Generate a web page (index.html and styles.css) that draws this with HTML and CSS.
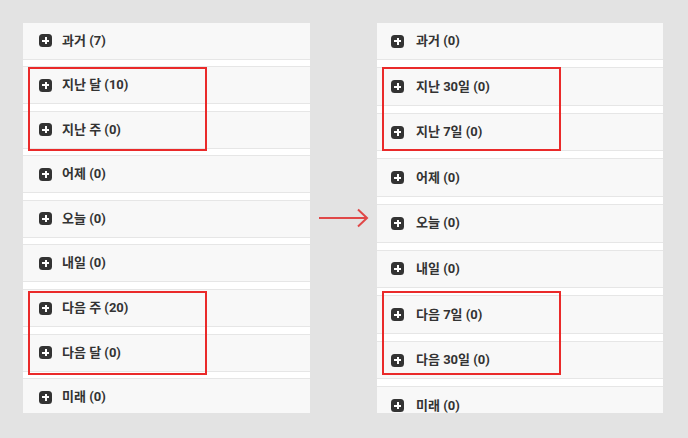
FILE: index.html
```html
<!DOCTYPE html>
<html lang="ko">
<head>
<meta charset="utf-8">
<link rel="stylesheet" href="styles.css">
</head>
<body>
<div class="stage">
  <div class="panel panel-left">
    <ul class="list">
      <li class="row"><span class="plus"></span><span class="label">과거 (7)</span></li>
      <li class="row"><span class="plus"></span><span class="label">지난 달 (10)</span></li>
      <li class="row"><span class="plus"></span><span class="label">지난 주 (0)</span></li>
      <li class="row"><span class="plus"></span><span class="label">어제 (0)</span></li>
      <li class="row"><span class="plus"></span><span class="label">오늘 (0)</span></li>
      <li class="row"><span class="plus"></span><span class="label">내일 (0)</span></li>
      <li class="row"><span class="plus"></span><span class="label">다음 주 (20)</span></li>
      <li class="row"><span class="plus"></span><span class="label">다음 달 (0)</span></li>
      <li class="row"><span class="plus"></span><span class="label">미래 (0)</span></li>
    </ul>
    <div class="mark mark-l1"></div>
    <div class="mark mark-l2"></div>
  </div>

  <div class="arrow">
    <svg width="50" height="20" viewBox="0 0 50 20">
      <path d="M0 10 H48 M39 1.5 L48 10 L39 18.5" fill="none" stroke="#e04848" stroke-width="2"/>
    </svg>
  </div>

  <div class="panel panel-right">
    <ul class="list">
      <li class="row"><span class="plus"></span><span class="label">과거 (0)</span></li>
      <li class="row"><span class="plus"></span><span class="label">지난 30일 (0)</span></li>
      <li class="row"><span class="plus"></span><span class="label">지난 7일 (0)</span></li>
      <li class="row"><span class="plus"></span><span class="label">어제 (0)</span></li>
      <li class="row"><span class="plus"></span><span class="label">오늘 (0)</span></li>
      <li class="row"><span class="plus"></span><span class="label">내일 (0)</span></li>
      <li class="row"><span class="plus"></span><span class="label">다음 7일 (0)</span></li>
      <li class="row"><span class="plus"></span><span class="label">다음 30일 (0)</span></li>
      <li class="row"><span class="plus"></span><span class="label">미래 (0)</span></li>
    </ul>
    <div class="mark mark-r1"></div>
    <div class="mark mark-r2"></div>
  </div>
</div>
</body>
</html>
```

FILE: styles.css
```css
html, body {
  margin: 0;
  padding: 0;
  background: #e3e3e3;
}

body {
  width: 688px;
  height: 438px;
  overflow: hidden;
  font-family: Roboto, "Noto Sans CJK KR", sans-serif;
}

.stage {
  display: flex;
  align-items: flex-start;
  padding: 23px 0 0 23px;
}

.panel {
  position: relative;
  height: 390px;
  background: #ffffff;
  overflow: hidden;
  flex: none;
}

.panel-left { width: 287px; }
.panel-right { width: 286px; }

.list {
  list-style: none;
  margin: 0;
  padding: 0;
}

.panel-left .list { margin-top: -1.5px; }
.panel-right .list { margin-top: -1.3px; }

.row {
  display: flex;
  align-items: center;
  box-sizing: border-box;
  background: #f8f8f8;
  border-top: 1px solid #e6e6e6;
  border-bottom: 1px solid #e6e6e6;
}

.panel-left .row {
  height: 38px;
  margin-bottom: 6.6px;
  padding-left: 16px;
  gap: 10px;
}

.panel-right .row {
  height: 38.6px;
  margin-bottom: 7px;
  padding-left: 14px;
  gap: 12px;
}

.plus {
  position: relative;
  width: 13px;
  height: 13px;
  border-radius: 3.5px;
  background: #333333;
  flex: none;
}

.plus::before,
.plus::after {
  content: "";
  position: absolute;
  background: #ffffff;
}

.plus::before {
  left: 3px;
  top: 5.5px;
  width: 7px;
  height: 2px;
}

.plus::after {
  left: 5.5px;
  top: 3px;
  width: 2px;
  height: 7px;
}

.label {
  font-size: 13px;
  font-weight: 700;
  color: #333333;
  line-height: 14px;
}

.arrow {
  flex: none;
  width: 67px;
  height: 390px;
  display: flex;
  align-items: center;
  justify-content: center;
}

.mark {
  position: absolute;
  border: 2px solid #ea2a2a;
  box-sizing: border-box;
  pointer-events: none;
}

.mark-l1 { left: 5px; top: 44px; width: 179px; height: 84px; }
.mark-l2 { left: 5px; top: 267.5px; width: 179px; height: 84px; }
.mark-r1 { left: 5px; top: 43.5px; width: 179px; height: 84px; }
.mark-r2 { left: 5px; top: 268px; width: 179px; height: 84px; }
```
